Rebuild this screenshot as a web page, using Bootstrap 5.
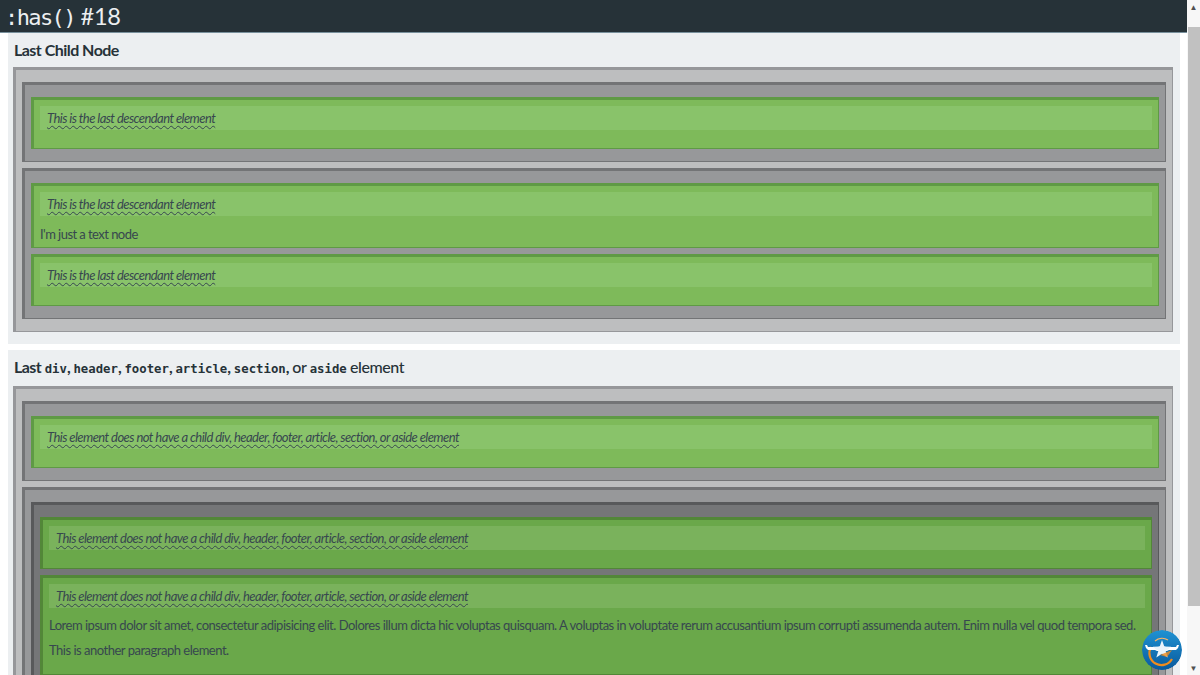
<!DOCTYPE html>
<html lang="en">
<head>
  <meta charset="UTF-8">
  <title>:has() #18</title>
  <meta name="viewport" content="width=device-width, initial-scale=1">
  <link href="https://cdn.jsdelivr.net/npm/bootstrap@5.3.3/dist/css/bootstrap.min.css" rel="stylesheet">
  <style>
    html, body { height: 675px; overflow: hidden; }
    body { font-family: Lato, "Liberation Sans", sans-serif; font-size: 13px; line-height: 24px; letter-spacing: -.55px; color: #37474f; background: #fff; }
    .page-wrap { height: 675px; }
    .page-main { width: 1187px; height: 675px; overflow: hidden; }
    .top-bar { height: 33px; background: #263238; color: #eceff1; font-size: 23.5px; line-height: 32px; padding-left: 5px; border-bottom: 1px solid #78909c; letter-spacing: -.3px; }
    .top-bar code { font-family: "DejaVu Sans Mono", monospace; font-size: 22px; letter-spacing: -1.6px; color: inherit; }
    .sect { background: #eceff1; margin: 0 7px 6px 8px; padding: 5px 7px 12px 5px; }
    .sect h2 { font-size: 16px; line-height: 24px; font-weight: 700; letter-spacing: -.53px; color: #263238; margin: 0 0 5px 1px; padding: 0; }
    .sect h2.with-code { margin-bottom: 7px; }
    .sect h2 code { font-family: "DejaVu Sans Mono", monospace; font-size: 12.3px; line-height: 1; font-weight: 700; letter-spacing: 0; color: inherit; }
    .sect h2 span { font-weight: 500; letter-spacing: -.45px; }
    .box-a, .box-b, .box-c { padding: 6px; border-style: solid; border-width: 3px 1px 1px 3px; }
    .box-a { background: #bdbebf; border-color: #96979a; }
    .box-b { background: #97989a; border-color: #737476; margin: 6px 0; }
    .box-c { background: #757678; border-color: #58595b; margin: 6px 0; }
    .green-a, .green-b { border-style: solid; border-width: 3px 1px 1px 3px; padding: 6px; margin: 6px 0; }
    .green-a { background: #7eba5a; border-color: #5f9a45; }
    .green-b { background: #6aa84a; border-color: #528738; }
    .box-b > * + *, .box-c > * + *, .box-a > * + * { margin-top: 0; }
    .leaf { display: block; padding: 0 7px; height: 24px; margin-bottom: 12px; font-style: italic; letter-spacing: -.56px; text-decoration: underline wavy #37474f 1px; text-underline-offset: 2px; }
    .green-a .leaf { background: #89c36a; }
    .green-b .leaf { background: #7ab25c; }
    .leaf.tight { margin-bottom: 0; }
    .plain { margin: 11px 0 0 0; line-height: 14px; }
    .plain-para { margin: 0; line-height: 25px; letter-spacing: -.49px; }
    .plain-para.first-para { margin-top: 5px; }
    .plain-para.last-para { margin-bottom: 5px; }
    .fake-scroll { width: 13px; height: 675px; background: #f7f7f7; }
    .fake-arrow { height: 27px; font-size: 8px; line-height: 14px; text-align: center; color: #505050; letter-spacing: 0; }
    .fake-thumb { height: 579px; width: 12px; margin-left: 1px; background: #c1c1c1; }
    .fake-arrow.down { height: 69px; line-height: 14px; padding-top: 55px; }
    .float-badge { position: fixed; left: 1142px; top: 630px; width: 40px; height: 40px; border-radius: 50%; }
  </style>
</head>
<body>

<div class="page-wrap d-flex">
  <div class="page-main">
    <div class="top-bar"><code>:has()</code> #18</div>

    <!-- Last child node -->
    <section class="sect">
      <h2>Last Child Node</h2>
      <div class="box-a">
        <div class="box-b">
          <div class="green-a"><em class="leaf">This is the last descendant element</em></div>
        </div>
        <div class="box-b">
          <div class="green-a">
            <em class="leaf tight">This is the last descendant element</em>
            <p class="plain">I'm just a text node</p>
          </div>
          <div class="green-a"><em class="leaf">This is the last descendant element</em></div>
        </div>
      </div>
    </section>

    <!-- Last element -->
    <section class="sect">
      <h2 class="with-code">Last <code>div</code>, <code>header</code>, <code>footer</code>, <code>article</code>, <code>section</code>, <span>or</span> <code>aside</code> <span>element</span></h2>
      <div class="box-a">
        <div class="box-b">
          <div class="green-a"><em class="leaf">This element does not have a child div, header, footer, article, section, or aside element</em></div>
        </div>
        <div class="box-b">
          <div class="box-c">
            <div class="green-b"><em class="leaf">This element does not have a child div, header, footer, article, section, or aside element</em></div>
            <div class="green-b">
              <em class="leaf tight">This element does not have a child div, header, footer, article, section, or aside element</em>
              <p class="plain-para first-para">Lorem ipsum dolor sit amet, consectetur adipisicing elit. Dolores illum dicta hic voluptas quisquam. A voluptas in voluptate rerum accusantium ipsum corrupti assumenda autem. Enim nulla vel quod tempora sed.</p>
              <p class="plain-para last-para">This is another paragraph element.</p>
            </div>
          </div>
        </div>
      </div>
    </section>
  </div>

  <div class="fake-scroll">
    <div class="fake-arrow">&#9650;</div>
    <div class="fake-thumb"></div>
    <div class="fake-arrow down">&#9660;</div>
  </div>
</div>

<svg class="float-badge" viewBox="0 0 40 40">
  <defs>
    <linearGradient id="badgeBlue" x1="0" y1="0" x2="0" y2="1">
      <stop offset="0" stop-color="#1f92d3"/>
      <stop offset="1" stop-color="#0a5a9c"/>
    </linearGradient>
  </defs>
  <circle cx="20" cy="20" r="20" fill="url(#badgeBlue)"/>
  <path d="M9 17a11.500 11.500 0 0 0 21 12" fill="none" stroke="#f08c1e" stroke-width="2.200"/>
  <path d="M13 11a11 11 0 0 1 13-1" fill="none" stroke="#f7b36a" stroke-width="1.200"/>
  <path d="M3 15h2l1 2h10l3-1h2l3 1h10l1-2h2l-1 3-2 2H27l-2 1H15l-2-1H6l-2-2z" fill="#fff"/>
  <path d="M20 10l2.300 6.600 6.900.2-5.500 4.200 2 6.600-5.700-3.900-5.700 3.900 2-6.600-5.500-4.200 6.900-.2z" fill="#eaf4fb"/>
  <path d="M18 25l12-5-5 7z" fill="#f08c1e" opacity=".8"/>
</svg>

</body>
</html>
